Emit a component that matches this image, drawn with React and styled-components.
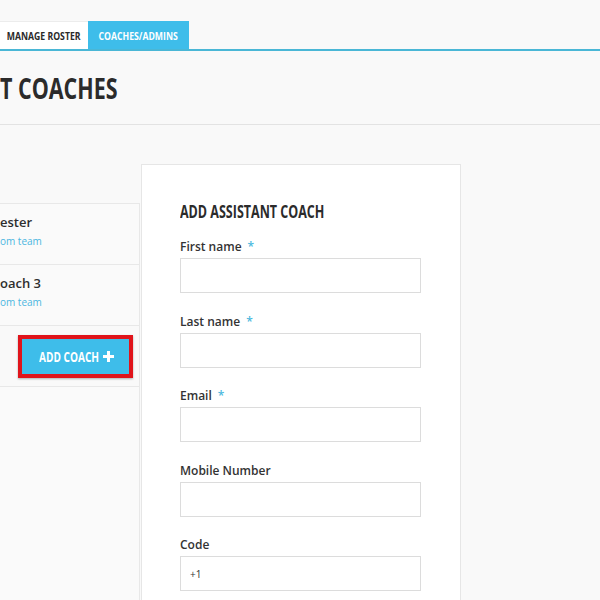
import React from 'react';
import styled, { createGlobalStyle } from 'styled-components';

const GlobalStyle = createGlobalStyle`
  body {
    margin: 0;
    background: #f9f9f9;
    font-family: "Open Sans", "Liberation Sans", sans-serif;
    overflow: hidden;
  }
`;

const Page = styled.div`
  width: 600px;
  height: 600px;
  overflow: hidden;
`;

// condensed look: no condensed face installed, so squeeze a bold sans
const Squeeze = styled.span`
  display: inline-block;
  white-space: nowrap;
  transform: scaleX(${p => p.x || 0.78});
  transform-origin: ${p => p.origin || 'left'} center;
  margin-right: ${p => p.mr || 0}px;
`;

const TabBar = styled.div`
  display: flex;
  padding-top: 21px;
  border-bottom: 2px solid #4ab7d6;
`;

const Tab = styled.div`
  width: ${p => p.w}px;
  height: 28px;
  display: flex;
  align-items: center;
  justify-content: center;
  box-sizing: border-box;
  background: ${p => (p.active ? '#3ebdea' : '#ffffff')};
  color: ${p => (p.active ? '#ffffff' : '#2a2a2a')};
  border-top: 1px solid ${p => (p.active ? '#3ebdea' : '#ececec')};
  font-weight: bold;
  font-size: 11px;
`;

const Header = styled.div`
  height: 73px;
  border-bottom: 1px solid #e3e3e3;
  display: flex;
  align-items: center;
`;

const Title = styled.h1`
  margin: 0;
  font-weight: bold;
  font-size: 29px;
  color: #2b2b2b;
`;

const Content = styled.div`
  display: flex;
  align-items: flex-start;
`;

const Side = styled.div`
  width: 140px;
  margin-top: 78px;
  display: flex;
  flex-direction: column;
`;

const CoachRow = styled.div`
  height: 61px;
  box-sizing: border-box;
  border-top: 1px solid #e8e8e8;
  border-right: 1px solid #e8e8e8;
  background: #fafafa;
  padding-top: 9px;
`;

const CoachName = styled.div`
  font-size: 13px;
  font-weight: 600;
  color: #2e2e2e;
  line-height: 18px;
`;

const CoachLink = styled.div`
  margin-top: 3px;
  font-size: 10px;
  color: #4bb6e0;
  line-height: 14px;
`;

const ButtonRow = styled.div`
  height: 61px;
  box-sizing: border-box;
  border-top: 1px solid #e8e8e8;
  border-right: 1px solid #e8e8e8;
  padding: 9px 0 0 18px;
`;

const AddButton = styled.button`
  width: 115px;
  height: 43px;
  border: 4px solid #e0141b;
  background: #3ebdea;
  color: #ffffff;
  font-family: "Open Sans", "Liberation Sans", sans-serif;
  font-weight: bold;
  font-size: 14px;
  display: flex;
  align-items: center;
  gap: 4px;
  padding: 0 0 0 17px;
  box-shadow: 0 1px 2px rgba(0, 0, 0, 0.3);
`;

const EmptyBox = styled.div`
  height: 230px;
  border-top: 1px solid #e8e8e8;
  border-right: 1px solid #e8e8e8;
  background: #fafafa;
`;

const Card = styled.div`
  width: 320px;
  margin-top: 39px;
  margin-left: 1px;
  background: #ffffff;
  border: 1px solid #e6e6e6;
  box-sizing: border-box;
  padding: 35px 0 40px 38px;
`;

const CardTitle = styled.h2`
  margin: 0 0 16px;
  font-weight: bold;
  font-size: 17px;
  color: #2b2b2b;
`;

const Field = styled.div`
  margin-bottom: 20.5px;
`;

const Label = styled.label`
  display: block;
  font-size: 12px;
  font-weight: 600;
  color: #333333;
  line-height: 16px;
  margin-bottom: 3px;
`;

const Star = styled.span`
  color: #4bb9de;
  margin-left: 6px;
`;

const Input = styled.input`
  display: block;
  width: 241px;
  height: 35px;
  box-sizing: border-box;
  border: 1px solid #dcdcdc;
  background: #ffffff;
  padding: 0 9px;
  font-family: "Open Sans", "Liberation Sans", sans-serif;
  font-size: 10px;
  color: #333;
  outline: none;
`;

const fields = [
  { label: 'First name', required: true },
  { label: 'Last name', required: true },
  { label: 'Email', required: true },
  { label: 'Mobile Number' },
  { label: 'Code', value: '+1' },
];

function PlusIcon() {
  return (
    <svg width="11" height="11" viewBox="0 0 11 11">
      <path d="M4 0h3v4h4v3H7v4H4V7H0V4h4z" fill="#ffffff" />
    </svg>
  );
}

export default function App() {
  return (
    <Page>
      <GlobalStyle />
      <TabBar>
        <Tab w={88}>
          <Squeeze x={0.79} origin="center">MANAGE ROSTER</Squeeze>
        </Tab>
        <Tab w={101} active>
          <Squeeze x={0.79} origin="center">COACHES/ADMINS</Squeeze>
        </Tab>
      </TabBar>
      <Header>
        <Title>
          <Squeeze x={0.74}>T COACHES</Squeeze>
        </Title>
      </Header>
      <Content>
        <Side>
          <CoachRow>
            <CoachName>ester</CoachName>
            <CoachLink>om team</CoachLink>
          </CoachRow>
          <CoachRow>
            <CoachName>oach 3</CoachName>
            <CoachLink>om team</CoachLink>
          </CoachRow>
          <ButtonRow>
            <AddButton>
              <Squeeze x={0.72} mr={-23}>ADD COACH</Squeeze>
              <PlusIcon />
            </AddButton>
          </ButtonRow>
          <EmptyBox />
        </Side>
        <Card>
          <CardTitle>
            <Squeeze x={0.735}>ADD ASSISTANT COACH</Squeeze>
          </CardTitle>
          {fields.map(f => (
            <Field key={f.label}>
              <Label>
                {f.label}
                {f.required && <Star>*</Star>}
              </Label>
              <Input defaultValue={f.value || ''} />
            </Field>
          ))}
        </Card>
      </Content>
    </Page>
  );
}
